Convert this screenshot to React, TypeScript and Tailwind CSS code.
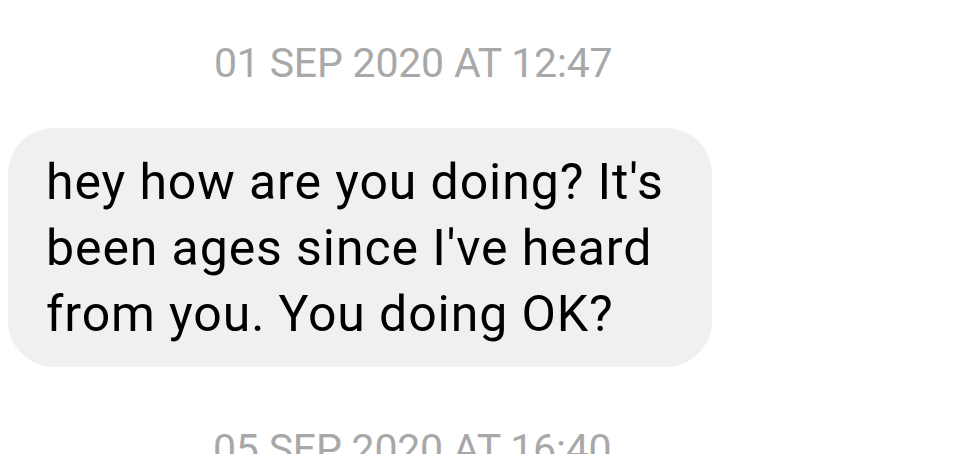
export default function App() {
  return (
    <div className="w-[977px] h-[454px] overflow-hidden bg-white font-['Roboto',sans-serif]">
      <div className="pt-[39px] pl-[214px] text-[41px] leading-[48px] text-[#a8a8a8] tracking-[-0.2px]">
        01 SEP 2020 AT 12:47
      </div>
      <div className="pt-[41px] pl-[8px]">
        <div className="w-[704px] h-[239px] rounded-[46px] bg-[#f0f0f0] pl-[38px] pt-[21px] text-[50px] leading-[66px] tracking-[0.9px] text-black">
          hey how are you doing? It's
          <br />
          been ages since I've heard
          <br />
          from you. You doing OK?
        </div>
      </div>
      <div className="pt-[58px] pl-[213px] text-[41px] leading-[48px] text-[#a8a8a8] tracking-[-0.2px]">
        05 SEP 2020 AT 16:40
      </div>
    </div>
  );
}
